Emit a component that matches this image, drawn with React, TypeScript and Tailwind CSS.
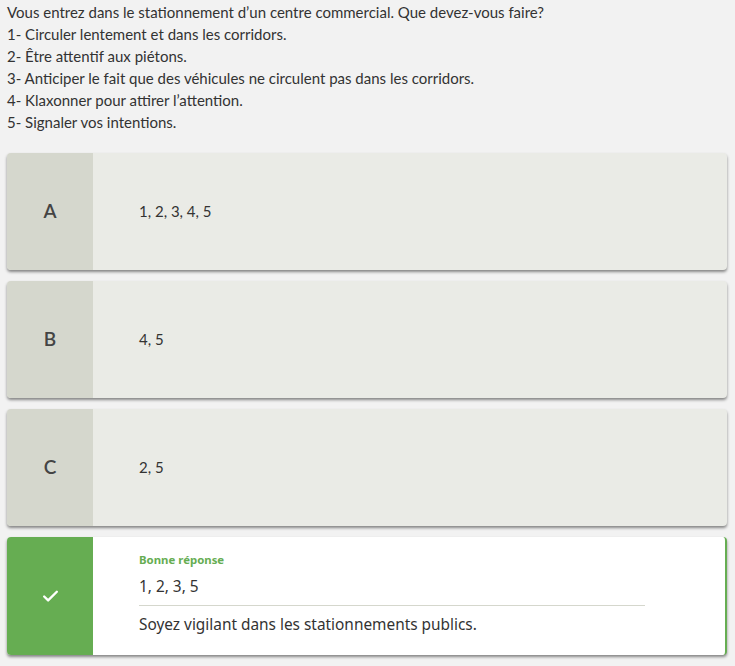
import { Check } from 'lucide-react';

const options = [
  { letter: 'A', text: '1, 2, 3, 4, 5' },
  { letter: 'B', text: '4, 5' },
  { letter: 'C', text: '2, 5' },
];

export default function App() {
  return (
    <div className="min-h-[666px] bg-[#f2f2f2] px-[7px] pt-[1px] pb-[10px] font-['Lato',sans-serif] text-[#333]">
      {/* Question */}
      <div className="text-[15px] leading-[22px]">
        <p>Vous entrez dans le stationnement d’un centre commercial. Que devez-vous faire?</p>
        <p>1- Circuler lentement et dans les corridors.</p>
        <p>2- Être attentif aux piétons.</p>
        <p>3- Anticiper le fait que des véhicules ne circulent pas dans les corridors.</p>
        <p>4- Klaxonner pour attirer l’attention.</p>
        <p>5- Signaler vos intentions.</p>
      </div>

      {/* Answers */}
      <div className="mt-[20px] mr-[1px] flex flex-col gap-[11px]">
        {options.map((opt) => (
          <div
            key={opt.letter}
            className="flex h-[117px] overflow-hidden rounded-[4px] bg-[#eaebe6] shadow-[0_2px_3px_rgba(0,0,0,0.45)]"
          >
            <div className="flex w-[86px] shrink-0 items-center justify-center bg-[#d5d7cd] text-[19px] font-semibold text-[#444]">
              {opt.letter}
            </div>
            <div className="flex items-center pl-[46px] text-[15px] text-[#333]">{opt.text}</div>
          </div>
        ))}

        <div className="flex h-[118px] overflow-hidden rounded-[4px] border-r-2 border-[#66ad52] bg-white shadow-[0_2px_3px_rgba(0,0,0,0.45)]">
          <div className="flex w-[86px] shrink-0 items-center justify-center bg-[#66ad52]">
            <Check className="h-[19px] w-[19px] text-white" strokeWidth={3} />
          </div>
          <div className="flex-1 pl-[46px] pt-[15px] font-['Noto_Sans',sans-serif]">
            <div className="text-[11.4px] font-bold leading-[16px] text-[#66ad52]">Bonne réponse</div>
            <div className="mt-[9px] w-[506px] border-b border-[#d5d7cd] pb-[8px] text-[15.4px] leading-[20px] text-[#333]">
              1, 2, 3, 5
            </div>
            <div className="mt-[9px] text-[15.4px] leading-[20px] text-[#333]">
              Soyez vigilant dans les stationnements publics.
            </div>
          </div>
        </div>
      </div>
    </div>
  );
}
